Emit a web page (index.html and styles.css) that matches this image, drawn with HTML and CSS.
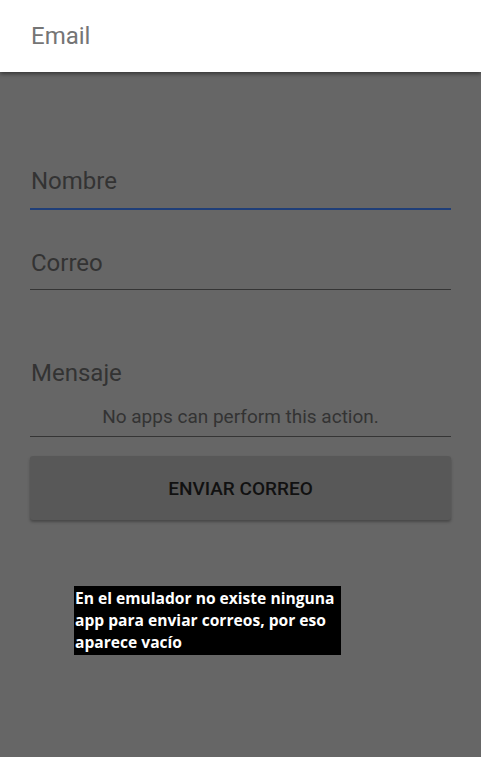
FILE: index.html
```html
<!DOCTYPE html>
<html lang="es">
<head>
<meta charset="utf-8">
<title>Email</title>
<link rel="stylesheet" href="styles.css">
</head>
<body>
<header class="appbar">
  <div class="appbar-title">Email</div>
</header>
<main class="content">
  <div class="field field-active">
    <div class="field-text">Nombre</div>
  </div>
  <div class="field field-correo">
    <div class="field-text">Correo</div>
  </div>
  <div class="field field-mensaje">
    <div class="field-text">Mensaje</div>
    <div class="empty-text">No apps can perform this action.</div>
  </div>
  <button class="send-btn" type="button">ENVIAR CORREO</button>
  <div class="note">En el emulador no existe ninguna<br>app para enviar correos, por eso<br>aparece vacío</div>
</main>
</body>
</html>
```
FILE: styles.css
```css
html, body {
  margin: 0;
  padding: 0;
}
body {
  background: #666666;
  font-family: Roboto, "Noto Sans", sans-serif;
  width: 481px;
  height: 757px;
  overflow: hidden;
}
.appbar {
  background: #ffffff;
  height: 72px;
  box-sizing: border-box;
  padding: 22px 0 0 31px;
  box-shadow: 0 2px 4px rgba(0,0,0,0.45);
  position: relative;
  z-index: 1;
}
.appbar-title {
  font-size: 24px;
  line-height: 28px;
  color: #757575;
}
.content {
  padding: 95px 30px 0 30px;
}
.field {
  border-bottom: 1px solid #353535;
}
.field-text {
  font-size: 24px;
  line-height: 28px;
  color: #333333;
  padding-left: 1px;
}
.field-active {
  border-bottom: 2px solid #1f3e78;
  padding-bottom: 13px;
}
.field-correo {
  margin-top: 39px;
  padding-bottom: 12px;
}
.field-mensaje {
  margin-top: 69px;
  padding-bottom: 8px;
}
.empty-text {
  margin-top: 19px;
  font-size: 19px;
  line-height: 22px;
  text-align: center;
  color: #333333;
}
.send-btn {
  display: block;
  width: 100%;
  height: 64px;
  margin-top: 19px;
  border: none;
  border-radius: 3px;
  background: #585858;
  box-shadow: 0 2px 3px rgba(0,0,0,0.3);
  font-family: Roboto, "Noto Sans", sans-serif;
  font-size: 19px;
  font-weight: 500;
  color: #111111;
  padding: 0;
}
.note {
  margin: 66px 0 0 44px;
  width: 267px;
  box-sizing: border-box;
  padding: 1px 1px 2px 1px;
  background: #000000;
  color: #ffffff;
  font-family: "Open Sans", sans-serif;
  font-weight: 700;
  font-size: 15.6px;
  line-height: 22px;
  white-space: nowrap;
  overflow: hidden;
}
```
